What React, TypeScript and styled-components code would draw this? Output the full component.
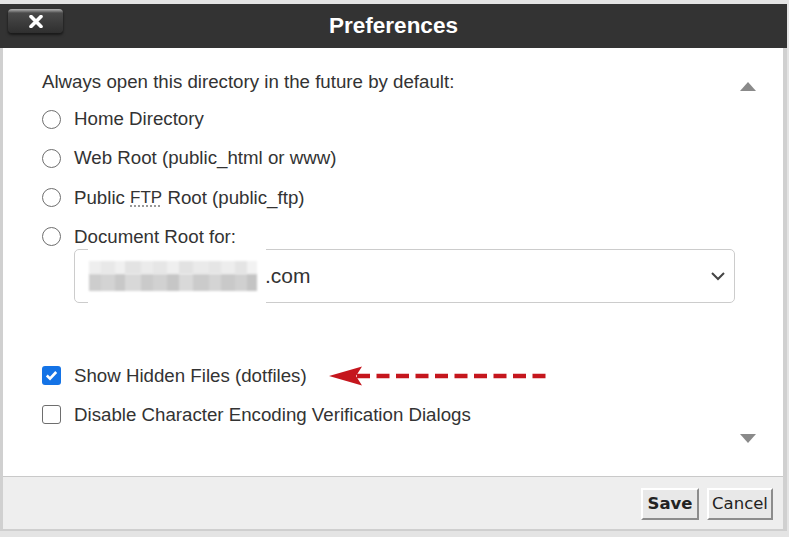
import React from "react";
import styled, { createGlobalStyle } from "styled-components";

const Global = createGlobalStyle`
  html, body { margin: 0; padding: 0; background: #e4e4e4; }
  body { font-family: "Liberation Sans", Arial, sans-serif; }
`;

const Page = styled.div`
  width: 789px;
  height: 537px;
  padding-top: 4px;
  box-sizing: border-box;
  background: #e4e4e4;
  overflow: hidden;
`;

const Dialog = styled.div`
  width: 787px;
  display: flex;
  flex-direction: column;
`;

const TitleBar = styled.div`
  height: 44px;
  background: #333333;
  display: grid;
  grid-template-columns: 1fr auto 1fr;
  align-items: center;
`;

const CloseButton = styled.button`
  justify-self: start;
  align-self: start;
  margin: 5px 0 0 8px;
  width: 55px;
  height: 24px;
  padding: 0;
  border: none;
  border-radius: 4px;
  background: linear-gradient(#b0b0b0 0, #808080 2px, #4a4a4a 4px, #3d3d3d 55%, #2f2f2f 100%);
  box-shadow: 0 1px 1px #1c1c1c, 0 2px 3px rgba(0, 0, 0, 0.5);
  display: flex;
  align-items: center;
  justify-content: center;
`;

const Title = styled.h1`
  margin: 0;
  color: #ffffff;
  font-size: 22.5px;
  font-weight: bold;
`;

const Frame = styled.div`
  border-left: 3px solid #d0d0d0;
  border-right: 4px solid #d0d0d0;
  border-bottom: 2px solid #cfcfcf;
  display: flex;
  flex-direction: column;
`;

const Content = styled.div`
  height: 428px;
  box-sizing: border-box;
  background: #ffffff;
  display: flex;
  padding: 22px 25px 0 39px;
`;

const Main = styled.div`
  flex: 1;
  display: flex;
  flex-direction: column;
  color: #333333;
  font-size: 18.7px;
`;

const Heading = styled.div`
  height: 24px;
  line-height: 24px;
  margin-bottom: 13px;
`;

const OptionList = styled.div`
  display: flex;
  flex-direction: column;
  gap: 15.3px;
`;

const Row = styled.label<{ $top?: number }>`
  height: 24px;
  display: flex;
  align-items: center;
  margin-top: ${(p) => p.$top ?? 0}px;
  white-space: nowrap;
`;

const Radio = styled.span`
  width: 19px;
  height: 19px;
  box-sizing: border-box;
  border: 1.5px solid #6e6e6e;
  border-radius: 50%;
  margin-right: 13px;
  flex: none;
`;

const Check = styled.span<{ $on?: boolean }>`
  width: 19px;
  height: 19px;
  box-sizing: border-box;
  border-radius: 3px;
  margin: 0 13px 0 0;
  flex: none;
  display: flex;
  align-items: center;
  justify-content: center;
  background: ${(p) => (p.$on ? "#1473e6" : "#ffffff")};
  border: ${(p) => (p.$on ? "none" : "1.5px solid #6e6e6e")};
`;

const Abbr = styled.abbr`
  text-decoration: underline dotted #888;
  text-underline-offset: 3px;
  font-size: 17px;
`;

const Select = styled.div`
  position: relative;
  margin-left: 32px;
  width: 661px;
  height: 54px;
  box-sizing: border-box;
  border: 1px solid #cccccc;
  border-radius: 5px;
  display: flex;
  align-items: center;
  justify-content: flex-end;
  padding-right: 8px;
`;

const Redacted = styled.div`
  position: absolute;
  left: 13px;
  top: -5px;
  bottom: -5px;
  width: 178px;
  background: #ffffff;
  display: flex;
  flex-direction: column;
  justify-content: center;
`;

const BlurStrip = styled.div<{ $h: number }>`
  display: flex;
  height: ${(p) => p.$h}px;
  margin-left: 1px;
  filter: blur(1.2px);
`;

const Block = styled.span<{ $c: string; $w: number }>`
  width: ${(p) => p.$w}px;
  height: 100%;
  background: ${(p) => p.$c};
`;

const DomainSuffix = styled.span`
  position: absolute;
  left: 190px;
  top: 50%;
  transform: translateY(-52%);
  font-size: 21px;
  color: #333;
`;

const ScrollCol = styled.div`
  width: 20px;
  display: flex;
  flex-direction: column;
  justify-content: space-between;
  align-items: center;
  padding: 12px 0 33px;
`;

const Tri = styled.span<{ $down?: boolean }>`
  width: 0;
  height: 0;
  border-left: 8px solid transparent;
  border-right: 8px solid transparent;
  ${(p) => (p.$down ? "border-top: 9px solid #8a8a8a;" : "border-bottom: 9px solid #8a8a8a;")}
`;

const ArrowMark = styled.svg`
  margin-left: 22px;
  flex: none;
`;

const Footer = styled.div`
  height: 53px;
  box-sizing: border-box;
  background: #eeeeee;
  border-top: 1px solid #c9c9c9;
  display: flex;
  justify-content: flex-end;
  align-items: center;
  gap: 8px;
  padding: 1px 10px 0 0;
`;

const Btn = styled.button<{ $bold?: boolean; $w: number }>`
  width: ${(p) => p.$w}px;
  height: 32px;
  box-sizing: border-box;
  padding: 0;
  background: #e8e8e8;
  border: 2px solid;
  border-color: #ffffff #8c8c8c #8c8c8c #ffffff;
  font-family: "DejaVu Sans", Verdana, sans-serif;
  font-size: 16.5px;
  font-weight: ${(p) => (p.$bold ? "bold" : "normal")};
  color: #222222;
`;

const topShades: [string, number][] = [
  ["#eeeeee", 12], ["#e8e8e8", 14], ["#f0f0f0", 10], ["#e3e3e3", 16], ["#ebebeb", 12],
  ["#e6e6e6", 14], ["#efefef", 12], ["#e2e2e2", 14], ["#eaeaea", 16], ["#e5e5e5", 12],
  ["#ededed", 14], ["#e4e4e4", 12], ["#f2f2f2", 10],
];
const bottomShades: [string, number][] = [
  ["#cdcdcd", 12], ["#d3d3d3", 14], ["#c8c8c8", 10], ["#d8d8d8", 16], ["#cacaca", 12],
  ["#d1d1d1", 14], ["#c6c6c6", 12], ["#d9d9d9", 14], ["#cbcbcb", 16], ["#d4d4d4", 12],
  ["#c9c9c9", 14], ["#d0d0d0", 12], ["#c4c4c4", 10],
];

export default function App() {
  return (
    <Page>
      <Global />
      <Dialog>
        <TitleBar>
          <CloseButton aria-label="Close">
            <svg width="14" height="13" viewBox="0 0 14 13">
              <path d="M2 1.5 L12 11.5 M12 1.5 L2 11.5" stroke="#ffffff" strokeWidth="3.6" strokeLinecap="round" />
            </svg>
          </CloseButton>
          <Title>Preferences</Title>
          <span />
        </TitleBar>
        <Frame>
          <Content>
            <Main>
              <Heading>Always open this directory in the future by default:</Heading>
              <OptionList>
                <Row><Radio />Home Directory</Row>
                <Row><Radio />Web Root (public_html or www)</Row>
                <Row><Radio />Public&nbsp;<Abbr title="File Transfer Protocol">FTP</Abbr>&nbsp;Root (public_ftp)</Row>
                <Row><Radio />Document Root for:</Row>
              </OptionList>
              <Select>
                <Redacted>
                  <BlurStrip $h={13}>
                    {topShades.map(([c, w], i) => <Block key={i} $c={c} $w={w} />)}
                  </BlurStrip>
                  <BlurStrip $h={17}>
                    {bottomShades.map(([c, w], i) => <Block key={i} $c={c} $w={w} />)}
                  </BlurStrip>
                </Redacted>
                <DomainSuffix>.com</DomainSuffix>
                <svg width="16" height="10" viewBox="0 0 16 10">
                  <path d="M2 2 L8 8 L14 2" fill="none" stroke="#444" strokeWidth="2" />
                </svg>
              </Select>
              <Row $top={61}>
                <Check $on>
                  <svg width="13" height="11" viewBox="0 0 13 11">
                    <path d="M1.8 5.5 L5 8.6 L11.2 2" fill="none" stroke="#fff" strokeWidth="2.6" />
                  </svg>
                </Check>
                Show Hidden Files (dotfiles)
                <ArrowMark width="222" height="22" viewBox="0 0 222 22">
                  <path d="M28 11 H220" stroke="#c5161d" strokeWidth="4.6" strokeDasharray="13 6.5" />
                  <polygon points="0,11 33,1.5 27,11 33,20.5" fill="#c5161d" />
                </ArrowMark>
              </Row>
              <Row $top={15}>
                <Check />
                Disable Character Encoding Verification Dialogs
              </Row>
            </Main>
            <ScrollCol>
              <Tri />
              <Tri $down />
            </ScrollCol>
          </Content>
          <Footer>
            <Btn $bold $w={58}>Save</Btn>
            <Btn $w={66}>Cancel</Btn>
          </Footer>
        </Frame>
      </Dialog>
    </Page>
  );
}
